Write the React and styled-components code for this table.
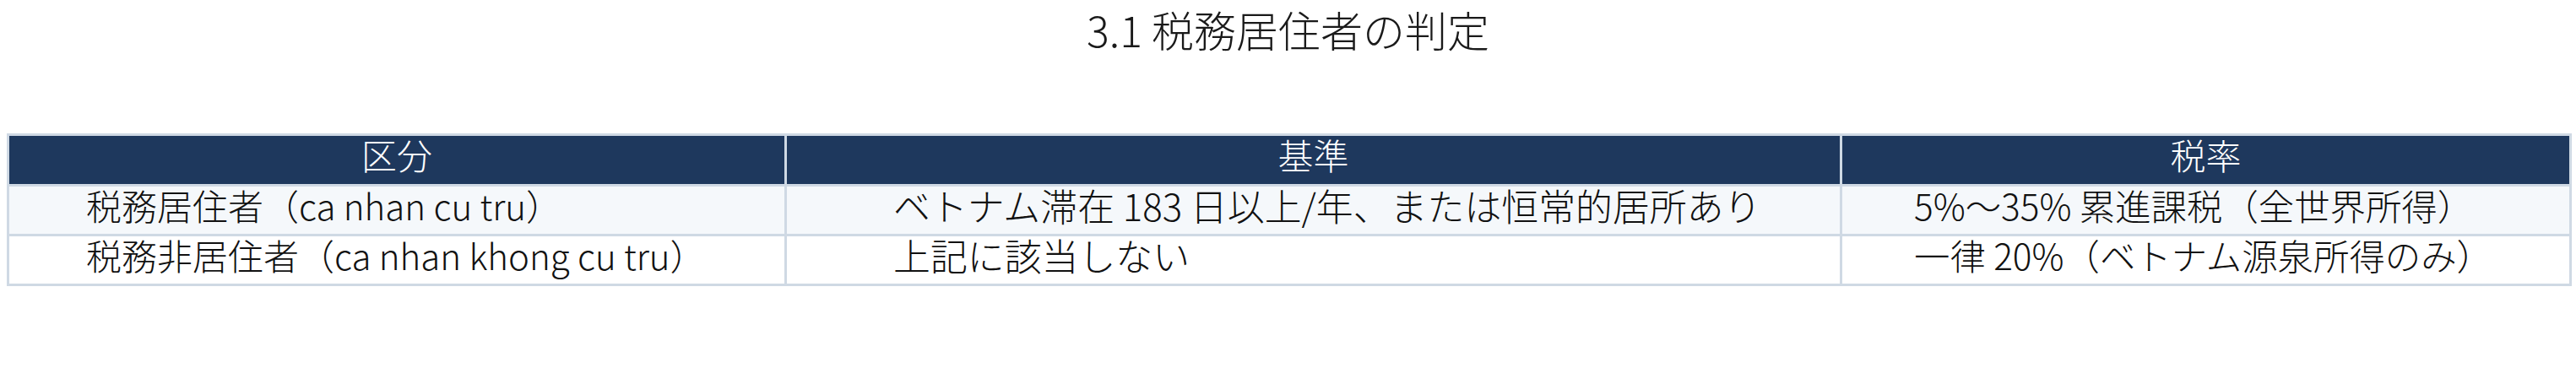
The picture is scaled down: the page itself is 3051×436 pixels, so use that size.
import React from "react";
import styled, { createGlobalStyle } from "styled-components";

const Global = createGlobalStyle`
  html, body { margin: 0; padding: 0; background: #ffffff; }
  body {
    font-family: "Noto Sans CJK JP", "Noto Sans", sans-serif;
    font-weight: 300;
    color: #111111;
  }
`;

const Page = styled.div`
  padding: 0 8px;
`;

const Title = styled.h2`
  margin: 0;
  height: 158px;
  box-sizing: border-box;
  font-size: 50px;
  line-height: 68px;
  font-weight: 300;
  text-align: center;
  color: #1a1a1a;
`;

const Table = styled.table`
  width: 100%;
  border-collapse: collapse;
  table-layout: fixed;
  border: 3px solid #cfd9e4;
`;

const HeadCell = styled.th`
  background: #1e385d;
  color: #ffffff;
  font-weight: 300;
  font-size: 42px;
  line-height: 40px;
  padding: 2px 0 15px;
  text-align: center;
  border: 3px solid #cfd9e4;
`;

const Row = styled.tr`
  background: ${(p) => (p.$striped ? "#f5f8fb" : "#ffffff")};
`;

const Cell = styled.td`
  font-size: ${(p) => p.$size}px;
  line-height: 40px;
  padding: 2px 0 14px ${(p) => p.$indent}px;
  text-align: left;
  white-space: nowrap;
  border: 3px solid #cfd9e4;
  color: #111111;
`;

const columns = [
  { label: "区分", width: 921, indent: 91, size: 42 },
  { label: "基準", width: 1250, indent: 126, size: 43.9 },
  { label: "税率", width: 864, indent: 85, size: 42.4 },
];

const rows = [
  [
    "税務居住者（ca nhan cu tru）",
    "ベトナム滞在 183 日以上/年、または恒常的居所あり",
    "5%〜35% 累進課税（全世界所得）",
  ],
  [
    "税務非居住者（ca nhan khong cu tru）",
    "上記に該当しない",
    "一律 20%（ベトナム源泉所得のみ）",
  ],
];

export default function App() {
  return (
    <>
      <Global />
      <Page>
        <Title>3.1 税務居住者の判定</Title>
        <Table>
          <colgroup>
            {columns.map((c) => (
              <col key={c.label} style={{ width: c.width }} />
            ))}
          </colgroup>
          <thead>
            <tr>
              {columns.map((c) => (
                <HeadCell key={c.label}>{c.label}</HeadCell>
              ))}
            </tr>
          </thead>
          <tbody>
            {rows.map((r, i) => (
              <Row key={i} $striped={i % 2 === 0}>
                {r.map((text, j) => (
                  <Cell key={j} $indent={columns[j].indent} $size={columns[j].size}>
                    {text}
                  </Cell>
                ))}
              </Row>
            ))}
          </tbody>
        </Table>
      </Page>
    </>
  );
}
